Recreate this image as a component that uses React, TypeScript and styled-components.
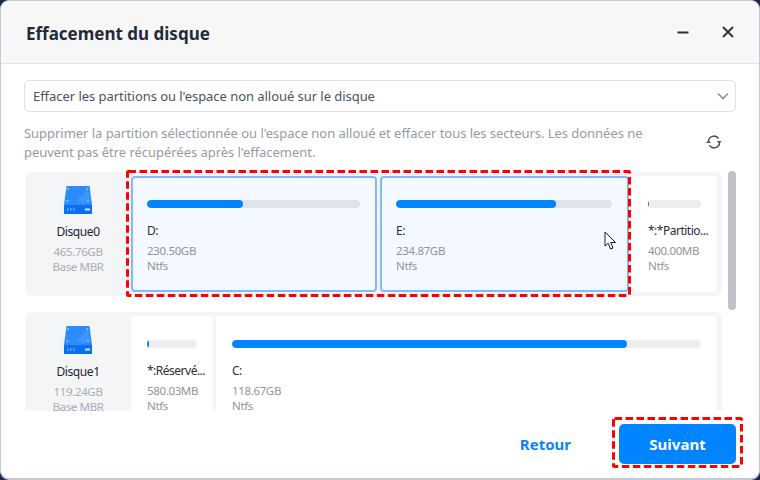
import React from "react";
import styled, { createGlobalStyle } from "styled-components";

const Global = createGlobalStyle`
  html, body { margin: 0; padding: 0; background: #1c2a52; }
  * { box-sizing: border-box; }
`;

const Stage = styled.div`
  position: relative;
  width: 760px;
  height: 480px;
  overflow: hidden;
  background: #1c2a52;
  font-family: "Noto Sans", "Open Sans", sans-serif;
`;

const Window = styled.div`
  width: 760px;
  height: 480px;
  display: flex;
  flex-direction: column;
  background: #fff;
  border: 1px solid #c3c9d6;
  border-bottom-width: 2px;
  border-radius: 9px;
  overflow: hidden;
`;

const Header = styled.header`
  height: 63px;
  flex: none;
  display: flex;
  align-items: center;
  justify-content: space-between;
  padding: 0 25px;
  background: #f7f7f8;
  border-bottom: 1px solid #e2e4e9;
`;

const Title = styled.h1`
  margin: 2px 0 0;
  font-size: 17px;
  font-weight: 700;
  color: #242b38;
`;

const WindowButtons = styled.div`
  display: flex;
  align-items: center;
  gap: 33px;
`;

const Body = styled.main`
  flex: 1;
  min-height: 0;
  display: flex;
  flex-direction: column;
  padding: 16px 23px 0;
`;

const Select = styled.div`
  height: 32px;
  flex: none;
  display: flex;
  align-items: center;
  justify-content: space-between;
  padding: 0 6px 0 8px;
  border: 1px solid #dde1e8;
  border-radius: 5px;
  font-size: 13px;
  letter-spacing: -0.05px;
  color: #4b5260;
`;

const DescriptionRow = styled.div`
  display: flex;
  justify-content: space-between;
  align-items: center;
  margin-top: 11px;
  height: 40px;
  flex: none;
`;

const Description = styled.p`
  margin: 0;
  width: 640px;
  font-size: 13px;
  letter-spacing: -0.04px;
  line-height: 19px;
  color: #959aa6;
`;

const Refresh = styled.svg`
  margin: 0 14px 2px 0;
`;

const ListArea = styled.div`
  margin-top: 8px;
  height: 240px;
  flex: none;
  display: flex;
  justify-content: space-between;
`;

const List = styled.div`
  width: 697px;
  margin-top: 1px;
  margin-left: 1px;
  display: flex;
  flex-direction: column;
  gap: 16px;
  overflow: hidden;
`;

const DiskRow = styled.section`
  flex: none;
  height: 124px;
  display: flex;
  gap: 3px;
  padding: 4px 4px 4px 0;
  border-radius: 6px;
  background: #f4f5f7;
`;

const DiskInfo = styled.div`
  width: 103px;
  flex: none;
  display: flex;
  flex-direction: column;
  align-items: center;
  padding: 9px 0 0 3px;
`;

const DiskName = styled.div`
  margin: 8px 0 3px;
  font-size: 12px;
  letter-spacing: -0.4px;
  line-height: 18px;
  color: #20262f;
`;

const DiskMeta = styled.div`
  font-size: 11.5px;
  letter-spacing: -0.35px;
  line-height: 15px;
  color: #a9adb6;
`;

const Partition = styled.div<{ $width: number; $selected?: boolean }>`
  width: ${(p) => p.$width}px;
  flex: none;
  padding: ${(p) => (p.$selected ? "22px 15px 0 14px" : "24px 16px 0 16px")};
  border-radius: 4px;
  background: ${(p) => (p.$selected ? "#f3f9ff" : "#fff")};
  border: ${(p) => (p.$selected ? "2px solid #86b7f6" : "none")};
`;

const Bar = styled.div<{ $selected?: boolean }>`
  height: 8px;
  border-radius: 4px;
  background: ${(p) => (p.$selected ? "#dfe4ea" : "#ebedef")};
  overflow: hidden;
`;

const BarFill = styled.div`
  height: 100%;
  border-radius: 4px;
  background: #0084ff;
`;

const PartName = styled.div`
  margin: 14px 0 3px;
  font-size: 12px;
  line-height: 18px;
  letter-spacing: -0.5px;
  color: #2a303a;
  white-space: nowrap;
`;

const PartMeta = styled.div`
  font-size: 11.5px;
  letter-spacing: -0.35px;
  line-height: 15px;
  color: #8f94a0;
`;

const ScrollTrack = styled.div`
  width: 8px;
  flex: none;
`;

const ScrollThumb = styled.div`
  height: 139px;
  border-radius: 4px;
  background: #bfc3c8;
`;

const Footer = styled.footer`
  flex: 1;
  display: flex;
  align-items: flex-start;
  justify-content: flex-end;
  gap: 48px;
  padding-top: 13px;
`;

const BackButton = styled.button`
  height: 40px;
  border: 0;
  padding: 0;
  background: none;
  font: 700 15px "Noto Sans", sans-serif;
  color: #0d84f5;
`;

const NextButton = styled.button`
  width: 117px;
  height: 40px;
  border: 0;
  border-radius: 5px;
  background: #0084ff;
  color: #fff;
  font: 700 15px "Noto Sans", sans-serif;
`;

const CalloutSvg = styled.svg<{ $x: number; $y: number }>`
  position: absolute;
  left: ${(p) => p.$x}px;
  top: ${(p) => p.$y}px;
  pointer-events: none;
`;

const Callout = ({ x, y, w, h }: { x: number; y: number; w: number; h: number }) => (
  <CalloutSvg $x={x} $y={y} width={w} height={h} viewBox={`0 0 ${w} ${h}`}>
    <rect
      x="1.5"
      y="1.5"
      width={w - 3}
      height={h - 3}
      rx="1"
      fill="none"
      stroke="#fe0000"
      strokeWidth="3"
      strokeDasharray="7.5 3.5"
    />
  </CalloutSvg>
);

const Cursor = styled.svg`
  position: absolute;
  left: 604px;
  top: 231px;
`;

const DiskIcon = () => (
  <svg width="32" height="30" viewBox="0 0 32 30">
    <path d="M4.5 1 H27.5 L30 20 H2 Z" fill="#2b8bff" />
    <path d="M14 16 L26 4 L28 14 L22 19 Z" fill="#4a9dff" opacity="0.6" />
    <rect x="2" y="20" width="28" height="9" fill="#0a6ff2" />
    <rect x="23" y="23.5" width="5" height="2" fill="#cfe6ff" />
    <rect x="5" y="23" width="1.5" height="3" fill="#5aa5ff" />
    <rect x="8" y="23" width="1.5" height="3" fill="#5aa5ff" />
    <rect x="11" y="23" width="1.5" height="3" fill="#5aa5ff" />
    <circle cx="6" cy="4" r="1" fill="#8cc0ff" />
    <circle cx="25" cy="4" r="1" fill="#8cc0ff" />
    <circle cx="5.5" cy="16" r="1" fill="#8cc0ff" />
    <circle cx="26" cy="16" r="1" fill="#8cc0ff" />
  </svg>
);

type PartitionData = { name: string; size: string; fs: string; width: number; pct: number; selected?: boolean };

const rows: { name: string; size: string; parts: PartitionData[] }[] = [
  {
    name: "Disque0",
    size: "465.76GB",
    parts: [
      { name: "D:", size: "230.50GB", fs: "Ntfs", width: 246, pct: 45, selected: true },
      { name: "E:", size: "234.87GB", fs: "Ntfs", width: 249, pct: 74, selected: true },
      { name: "*:*Partitio...", size: "400.00MB", fs: "Ntfs", width: 85, pct: 2 },
    ],
  },
  {
    name: "Disque1",
    size: "119.24GB",
    parts: [
      { name: "*:Réservé...", size: "580.03MB", fs: "Ntfs", width: 82, pct: 4 },
      { name: "C:", size: "118.67GB", fs: "Ntfs", width: 501, pct: 84.2 },
    ],
  },
];

export default function App() {
  return (
    <Stage>
      <Global />
      <Window>
        <Header>
          <Title>Effacement du disque</Title>
          <WindowButtons>
            <svg width="12" height="12" viewBox="0 0 12 12">
              <path d="M0.5 6.5 H11.5" stroke="#2a2f38" strokeWidth="2" />
            </svg>
            <svg width="12" height="12" viewBox="0 0 12 12">
              <path d="M1 1 L11 11 M11 1 L1 11" stroke="#2a2f38" strokeWidth="1.8" />
            </svg>
          </WindowButtons>
        </Header>
        <Body>
          <Select>
            <span>Effacer les partitions ou l'espace non alloué sur le disque</span>
            <svg width="12" height="8" viewBox="0 0 12 8">
              <path d="M1 1.5 L6 6.5 L11 1.5" fill="none" stroke="#8b909c" strokeWidth="1.6" />
            </svg>
          </Select>
          <DescriptionRow>
            <Description>
              Supprimer la partition sélectionnée ou l'espace non alloué et effacer tous les secteurs. Les données ne
              peuvent pas être récupérées après l'effacement.
            </Description>
            <Refresh width="16" height="16" viewBox="0 0 16 16">
              <path d="M2.4 7.5 A5.6 5.6 0 0 1 12.6 4.6" fill="none" stroke="#4a5160" strokeWidth="1.5" />
              <path d="M13.6 8.5 A5.6 5.6 0 0 1 3.4 11.4" fill="none" stroke="#4a5160" strokeWidth="1.5" />
              <path d="M10.8 7 H15.6 L13.2 9.8 Z" fill="#4a5160" />
              <path d="M0 9 H5 L2.5 6.2 Z" fill="#4a5160" />
            </Refresh>
          </DescriptionRow>
          <ListArea>
            <List>
              {rows.map((row) => (
                <DiskRow key={row.name}>
                  <DiskInfo>
                    <DiskIcon />
                    <DiskName>{row.name}</DiskName>
                    <DiskMeta>{row.size}</DiskMeta>
                    <DiskMeta>Base MBR</DiskMeta>
                  </DiskInfo>
                  {row.parts.map((part) => (
                    <Partition key={part.name} $width={part.width} $selected={part.selected}>
                      <Bar $selected={part.selected}>
                        <BarFill style={{ width: `${part.pct}%` }} />
                      </Bar>
                      <PartName>{part.name}</PartName>
                      <PartMeta>{part.size}</PartMeta>
                      <PartMeta>{part.fs}</PartMeta>
                    </Partition>
                  ))}
                </DiskRow>
              ))}
            </List>
            <ScrollTrack>
              <ScrollThumb />
            </ScrollTrack>
          </ListArea>
          <Footer>
            <BackButton>Retour</BackButton>
            <NextButton>Suivant</NextButton>
          </Footer>
        </Body>
      </Window>
      <Callout x={126} y={170} w={505} h={127} />
      <Callout x={612} y={417} w={131} h={51} />
      <Cursor width="13" height="20" viewBox="0 0 13 20">
        <path d="M1 1 V15 L4.2 12.2 L6.6 18 L9 17 L6.8 11.5 H11.5 Z" fill="#fff" stroke="#1a1a2a" strokeWidth="1" />
      </Cursor>
    </Stage>
  );
}
